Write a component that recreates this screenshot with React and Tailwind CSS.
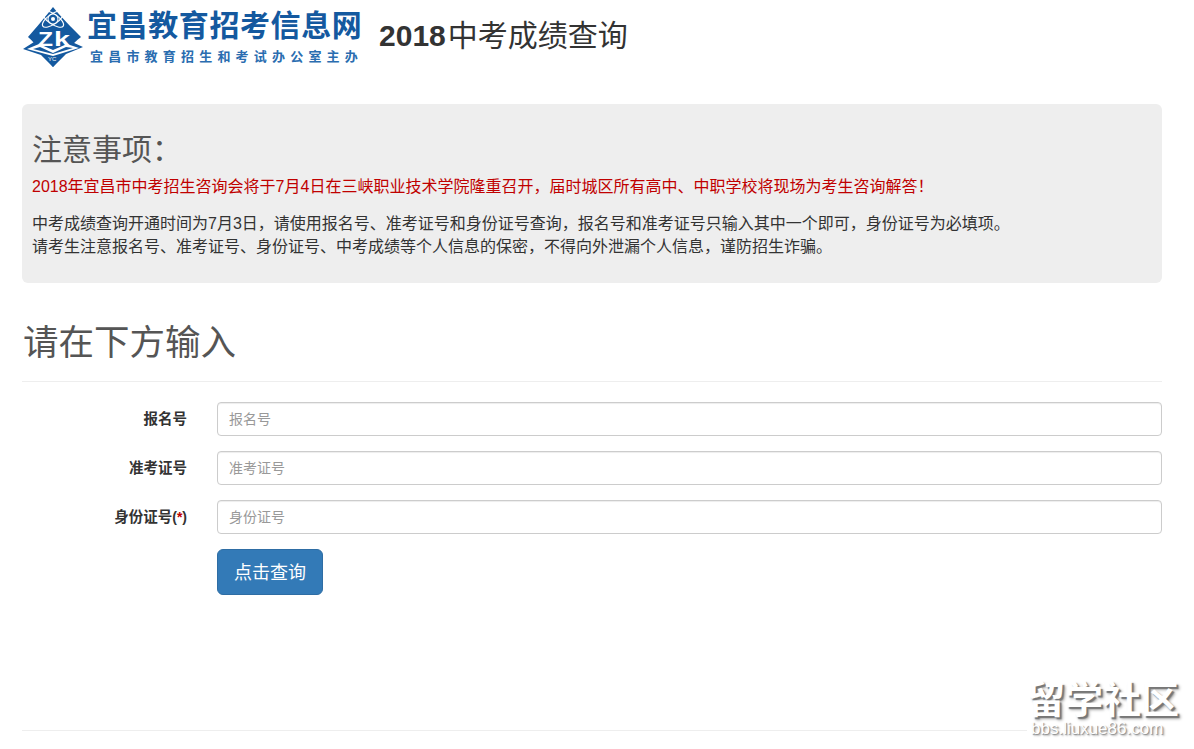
import React from "react";

const cjk = "font-['Liberation_Sans','Noto_Sans_CJK_SC',sans-serif]";

function Logo() {
  return (
    <div className="flex items-start">
      <svg width="62" height="62" viewBox="0 0 62 62" className="mt-[6px] shrink-0">
        <path d="M31 1 C38 10 50 22 59 31 C50 38 40 50 31 61 C22 50 14 38 6 31 C14 22 24 10 31 1Z" fill="#14599f" />
        <path d="M1 43 L12 36 L50 36 L61 41 L44 48 L31 61 L19 49Z" fill="#14599f" />
        <path d="M5 43 L17 38 L31 44 L45 38 L57 42 L31 50Z" fill="#ffffff" />
        <path d="M11 43 L18 41 L31 47 L44 41 L51 42 L31 48Z" fill="#14599f" />
        <g fill="none" stroke="#ffffff" strokeWidth="1.1">
          <ellipse cx="31" cy="13" rx="12.5" ry="5" transform="rotate(35 31 13)" />
          <ellipse cx="31" cy="13" rx="12.5" ry="5" transform="rotate(-35 31 13)" />
          <circle cx="31" cy="13" r="5" />
        </g>
        <circle cx="31" cy="13" r="2" fill="#ffffff" />
        <text x="16" y="40" fill="#ffffff" fontSize="20" fontWeight="700" fontFamily="Liberation Sans" textLength="15" lengthAdjust="spacingAndGlyphs">Z</text>
        <text x="32" y="40" fill="#ffffff" fontSize="21" fontWeight="700" fontFamily="Liberation Sans" textLength="16" lengthAdjust="spacingAndGlyphs">k</text>
        <text x="26" y="55" fill="#ffffff" fontSize="6" fontFamily="Liberation Sans">YC</text>
      </svg>
      <div className="ml-[3px] mt-[9px]">
        <div className="text-[30px] leading-[34px] tracking-[0.6px] font-bold text-[#14599f] whitespace-nowrap">宜昌教育招考信息网</div>
        <div className="mt-[6px] ml-[3px] text-[13px] leading-[16px] tracking-[5.2px] font-bold text-[#2a6db0] whitespace-nowrap">宜昌市教育招生和考试办公室主办</div>
      </div>
    </div>
  );
}

function Field({ label, required, placeholder }) {
  return (
    <div className="flex items-center mb-[15px]">
      <label className="w-[165px] pt-[1px] text-right text-[14.5px] font-bold text-[#333333]">
        {label}
        {required && <span className="text-[14px]">(<span className="text-[#c00000]">*</span>)</span>}
      </label>
      <input
        placeholder={placeholder}
        className="ml-[30px] flex-1 h-[34px] px-[11px] bg-white border border-[#cccccc] rounded-[4px] text-[14px] text-[#555555] placeholder:text-[#999999] shadow-[inset_0_1px_1px_rgba(0,0,0,0.075)] outline-none"
      />
    </div>
  );
}

export default function App() {
  return (
    <div className={`relative h-[749px] overflow-hidden bg-white text-[#333333] ${cjk}`}>
      <div className="w-[1140px] ml-[22px]">
        <div className="flex items-start h-[104px]">
          <Logo />
          <h2 className="ml-[16px] mt-[18px] text-[30px] leading-[36px] text-[#333333] whitespace-nowrap">
            <span className="font-bold mr-[2px]">2018</span>中考成绩查询
          </h2>
        </div>

        <div className="h-[179px] bg-[#eeeeee] rounded-[6px] px-[10px] pt-[27px]">
          <h2 className="text-[30px] leading-[38px] text-[#555555]">注意事项：</h2>
          <p className="mt-[7px] text-[16px] leading-[22px] text-[#c00000]">2018年宜昌市中考招生咨询会将于7月4日在三峡职业技术学院隆重召开，届时城区所有高中、中职学校将现场为考生咨询解答！</p>
          <p className="mt-[14px] text-[16px] leading-[23px]">
            中考成绩查询开通时间为7月3日，请使用报名号、准考证号和身份证号查询，报名号和准考证号只输入其中一个即可，身份证号为必填项。
            <br />
            请考生注意报名号、准考证号、身份证号、中考成绩等个人信息的保密，不得向外泄漏个人信息，谨防招生诈骗。
          </p>
        </div>

        <div className="mt-[38px] h-[61px] border-b border-[#eeeeee] pl-[1px]">
          <h1 className="text-[35.5px] leading-[44px] text-[#555555]">请在下方输入</h1>
        </div>

        <form className="mt-[20px]">
          <Field label="报名号" placeholder="报名号" />
          <Field label="准考证号" placeholder="准考证号" />
          <Field label="身份证号" required placeholder="身份证号" />
          <button type="button" className="ml-[195px] w-[106px] h-[46px] pt-[2px] bg-[#337ab7] border border-[#2e6da4] rounded-[6px] text-[18px] text-white">点击查询</button>
        </form>

        <div className="mt-[135px] border-t border-[#eeeeee]" />
      </div>

      <div className="absolute left-[1027px] top-[680px] w-[167px] h-[60px] bg-white text-white font-bold [text-shadow:2px_2px_1px_#777777,3px_3px_3px_#aaaaaa]">
        <div className="text-[38px] leading-[40px] whitespace-nowrap">留学社区</div>
        <div className="ml-[4px] -mt-[1px] text-[17px] leading-[20px] font-normal whitespace-nowrap [text-shadow:1px_1px_1px_#888888,2px_2px_2px_#bbbbbb]">bbs.liuxue86.com</div>
      </div>
    </div>
  );
}
